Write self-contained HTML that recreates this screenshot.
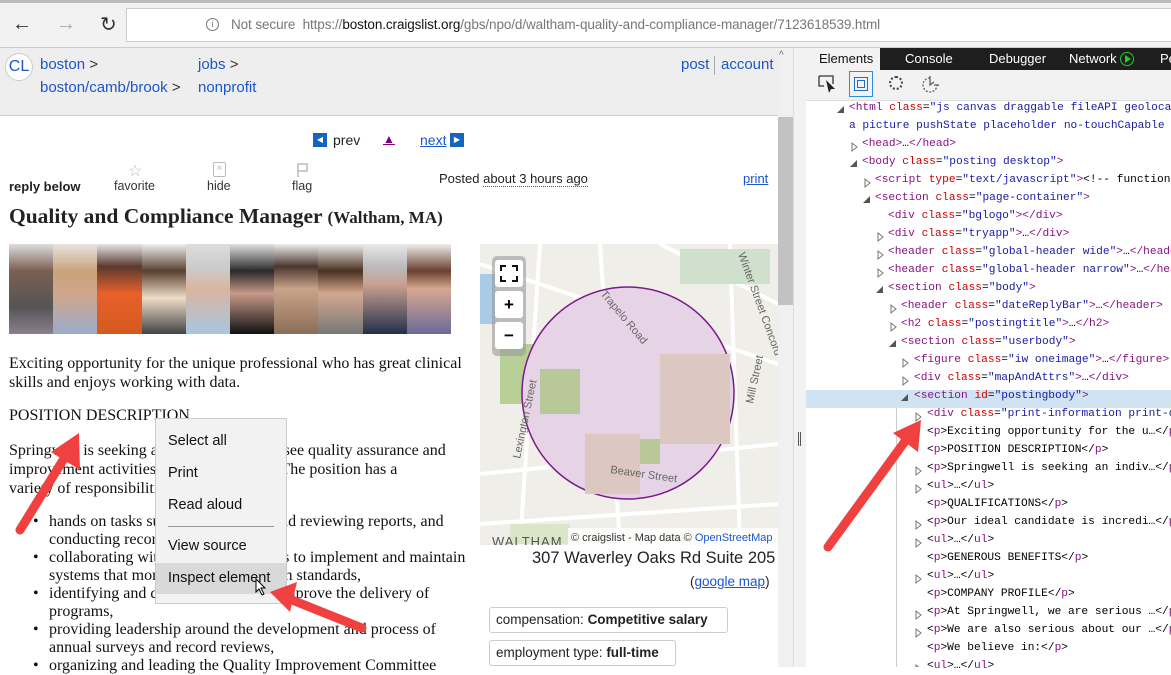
<!DOCTYPE html>
<html><head><meta charset="utf-8"><style>
*{margin:0;padding:0;box-sizing:border-box}
body{width:1171px;height:667px;overflow:hidden;background:#fff;position:relative;font-family:"Liberation Sans",sans-serif}
.a{position:absolute;white-space:nowrap}
.lk{color:#1a56cc}
.s{font-family:"Liberation Serif",serif;font-size:16px;color:#111}
.m{font-family:"Liberation Mono",monospace;font-size:11.2px;color:#000}
.n{color:#881280}.at{color:#c80000}.v{color:#1a1aa6}
ul.b{list-style:none}
ul.b li{position:relative;padding-left:16px;line-height:18px}
ul.b li:before{content:"\2022";position:absolute;left:0;top:0}
</style></head><body>
<div class="a" style="left:0;top:0;width:1171px;height:3px;background:#bbb"></div>
<div class="a" style="left:0;top:3px;width:1171px;height:45px;background:#f2f2f2;border-bottom:1px solid #ccc"></div>
<div class="a" style="left:12px;top:13px;font-size:20px;color:#333">&#8592;</div>
<div class="a" style="left:56px;top:13px;font-size:20px;color:#aaa">&#8594;</div>
<div class="a" style="left:100px;top:12px;font-size:20px;color:#333">&#8635;</div>
<svg class="a" style="left:144px;top:16px" width="18" height="16"><path d="M2 8 L9 2 L16 8 M4 7 V15 H8 V10 H10 V15 H14 V7" fill="none" stroke="#333" stroke-width="1.3"/></svg>
<div class="a" style="left:126px;top:8px;width:1045px;height:34px;background:#fff;border:1px solid #ccc;border-right:none"></div>
<div class="a" style="left:206px;top:18px;width:13px;height:13px;border:1px solid #777;border-radius:50%;font-size:9px;text-align:center;line-height:11px;color:#777">i</div>
<div class="a" style="left:231px;top:17px;font-size:13.5px;color:#777;letter-spacing:-0.1px">Not secure&nbsp; https://<span style="color:#111">boston.craigslist.org</span>/gbs/npo/d/waltham-quality-and-compliance-manager/7123618539.html</div>

<div class="a" style="left:0;top:48px;width:778px;height:68px;background:#eee;border-bottom:1px solid #ccc"></div>
<div class="a" style="left:5px;top:53px;width:28px;height:28px;border-radius:50%;background:#fff;border:1px solid #ccc;color:#1a56cc;font-size:16px;text-align:center;line-height:26px">CL</div>
<div class="a lk" style="left:40px;top:56px;font-size:15px">boston <span style="color:#333">&gt;</span></div>
<div class="a lk" style="left:40px;top:79px;font-size:15px">boston/camb/brook <span style="color:#333">&gt;</span></div>
<div class="a lk" style="left:198px;top:56px;font-size:15px">jobs <span style="color:#333">&gt;</span></div>
<div class="a lk" style="left:198px;top:79px;font-size:15px">nonprofit</div>
<div class="a lk" style="left:681px;top:56px;font-size:15px">post</div>
<div class="a" style="left:714px;top:56px;width:1px;height:19px;background:#aaa"></div>
<div class="a lk" style="left:721px;top:56px;font-size:15px">account</div>

<div class="a" style="left:313px;top:133px;width:14px;height:14px;background:#1565c0;color:#fff;font-size:8px;text-align:center;line-height:14px">&#9664;</div>
<div class="a" style="left:333px;top:132px;font-size:14px;color:#222">prev</div>
<div class="a" style="left:383px;top:132px;font-size:12px;color:#800080;text-decoration:underline">&#9650;</div>
<div class="a lk" style="left:420px;top:132px;font-size:14px;text-decoration:underline;width:50px;height:18px">next</div>
<div class="a" style="left:450px;top:133px;width:14px;height:14px;background:#1565c0;color:#fff;font-size:8px;text-align:center;line-height:14px">&#9654;</div>

<div class="a" style="left:9px;top:179px;font-size:13px;font-weight:bold;color:#222">reply below</div>
<div class="a" style="left:128px;top:161px;font-size:16px;color:#bbb">&#9734;</div>
<div class="a" style="left:114px;top:179px;font-size:12.5px;color:#333">favorite</div>
<div class="a" style="left:213px;top:162px;width:13px;height:15px;border:1.5px solid #bbb;border-radius:2px;font-size:10px;color:#bbb;text-align:center;line-height:12px">&#215;</div>
<div class="a" style="left:207px;top:179px;font-size:12.5px;color:#333">hide</div>
<svg class="a" style="left:296px;top:162px" width="14" height="16"><path d="M2 15 V2 H11 V9 H2" fill="none" stroke="#bbb" stroke-width="1.5"/></svg>
<div class="a" style="left:292px;top:179px;font-size:12.5px;color:#333">flag</div>
<div class="a" style="left:439px;top:171px;font-size:13px;color:#222">Posted <span style="border-bottom:1px dotted #555">about 3 hours ago</span></div>
<div class="a lk" style="left:743px;top:171px;font-size:13px;text-decoration:underline">print</div>
<div class="a" style="left:9px;top:204px;font-family:'Liberation Serif',serif;font-size:21.5px;font-weight:bold;color:#222">Quality and Compliance Manager <span style="font-size:17px">(Waltham, MA)</span></div>

<div class="a" style="left:9px;top:244px;width:442px;height:90px;display:flex">
<div style="flex:1;background:linear-gradient(180deg,#ddd 0%,#7a5f52 30%,#555 70%,#8a7f90 100%)"></div>
<div style="flex:1;background:linear-gradient(180deg,#e8e4e0 0%,#c9a27a 30%,#d0a58a 55%,#9aaccc 100%)"></div>
<div style="flex:1;background:linear-gradient(180deg,#e5e5e5 0%,#5a3a30 25%,#e8602a 55%,#d55a20 100%)"></div>
<div style="flex:1;background:linear-gradient(180deg,#eee 0%,#5a4030 30%,#eeddc8 60%,#444 100%)"></div>
<div style="flex:1;background:linear-gradient(180deg,#ddd 0%,#ccc 25%,#d9b5a0 50%,#a8c6e0 100%)"></div>
<div style="flex:1;background:linear-gradient(180deg,#e0e0e0 0%,#2a2a2a 30%,#c89a8a 55%,#111 100%)"></div>
<div style="flex:1;background:linear-gradient(180deg,#eee 0%,#4a3630 25%,#c9a48a 50%,#8b6e56 100%)"></div>
<div style="flex:1;background:linear-gradient(180deg,#eee 0%,#4a3020 30%,#d4a890 55%,#777 100%)"></div>
<div style="flex:1;background:linear-gradient(180deg,#e8e8e8 0%,#bbb 25%,#c9a090 45%,#22304a 100%)"></div>
<div style="flex:1;background:linear-gradient(180deg,#eee 0%,#6a4030 30%,#d6a890 50%,#6a6a9a 100%)"></div>
</div>

<div class="a s" style="left:9px;top:354px;line-height:19px">Exciting opportunity for the unique professional who has great clinical<br>skills and enjoys working with data.</div>
<div class="a s" style="left:9px;top:407px">POSITION DESCRIPTION</div>
<div class="a s" style="left:9px;top:441px;line-height:19px">Springwell is seeking an individual to oversee quality assurance and<br>improvement activities within the agency. The position has a<br>variety of responsibilities consisting of:</div>
<ul class="a s b" style="left:33px;top:513px">
<li>hands on tasks such as completing and reviewing reports, and<br>conducting record reviews,</li>
<li>collaborating with program managers to implement and maintain<br>systems that monitor compliance with standards,</li>
<li>identifying and developing ways to improve the delivery of<br>programs,</li>
<li>providing leadership around the development and process of<br>annual surveys and record reviews,</li>
<li>organizing and leading the Quality Improvement Committee</li>
</ul>

<svg class="a" style="left:480px;top:244px" width="298" height="301">
<rect width="298" height="301" fill="#f0eee9"/>
<path d="M0 20 L298 120 M60 0 L40 301 M120 0 L140 301 M180 0 L298 60 M0 230 L298 200 M0 280 L298 260 M250 0 L260 301" stroke="#fff" stroke-width="4" fill="none"/>
<rect x="200" y="5" width="90" height="35" fill="#cfe0cc"/>
<rect x="20" y="100" width="60" height="60" fill="#b8cf98"/>
<rect x="30" y="280" width="60" height="20" fill="#d9e6c8"/>
<rect x="0" y="30" width="15" height="50" fill="#a8cbe8"/>
<circle cx="148" cy="149" r="106" fill="#e6d4e6" stroke="#7a1a8a" stroke-width="1.5"/>
<rect x="180" y="110" width="70" height="90" fill="#dcc8c0"/>
<rect x="105" y="190" width="55" height="60" fill="#dcc8c0"/>
<rect x="60" y="125" width="40" height="45" fill="#b8c898"/>
<rect x="160" y="195" width="20" height="25" fill="#b8c898"/>
<text x="120" y="50" font-size="11" fill="#666" transform="rotate(50 120 50)">Trapelo Road</text>
<text x="130" y="229" font-size="11" fill="#666" transform="rotate(8 130 229)">Beaver Street</text>
<text x="40" y="215" font-size="11" fill="#666" transform="rotate(-78 40 215)">Lexington Street</text>
<text x="258" y="10" font-size="11" fill="#666" transform="rotate(70 258 10)">Winter Street Concord</text>
<text x="273" y="160" font-size="11" fill="#666" transform="rotate(-78 273 160)">Mill Street</text>
<rect x="12" y="12" width="34" height="100" rx="5" fill="#999" opacity=".6"/>
<rect x="15" y="16" width="28" height="27" rx="3" fill="#fff"/>
<path d="M21 27 V22 H26 M32 22 H37 V27 M37 32 V37 H32 M26 37 H21 V32" stroke="#111" stroke-width="2" fill="none"/>
<rect x="15" y="47" width="28" height="27" rx="3" fill="#fff"/>
<text x="29" y="66" font-size="17" font-weight="bold" text-anchor="middle">+</text>
<rect x="15" y="78" width="28" height="27" rx="3" fill="#fff"/>
<text x="29" y="97" font-size="17" font-weight="bold" text-anchor="middle">−</text>
<rect x="88" y="284" width="210" height="17" fill="#fff" opacity=".8"/>
<text x="91" y="297" font-size="11" fill="#333">© craigslist - Map data © <tspan fill="#1a56cc">OpenStreetMap</tspan></text>
<text x="12" y="302" font-size="13" fill="#555" letter-spacing="1">WALTHAM</text>
</svg>
<div class="a" style="left:532px;top:549px;font-size:16.5px;color:#222">307 Waverley Oaks Rd Suite 205</div>
<div class="a" style="left:690px;top:574px;font-size:13.5px;color:#222">(<span class="lk" style="text-decoration:underline">google map</span>)</div>
<div class="a" style="left:489px;top:607px;width:239px;height:26px;border:1px solid #ccc;border-radius:3px;font-size:13.5px;color:#222;padding:4px 6px">compensation: <b>Competitive salary</b></div>
<div class="a" style="left:489px;top:640px;width:187px;height:26px;border:1px solid #ccc;border-radius:3px;font-size:13.5px;color:#222;padding:4px 6px">employment type: <b>full-time</b></div>

<div class="a" style="left:155px;top:418px;width:132px;height:186px;background:#f2f2f2;border:1px solid #ccc"></div>
<div class="a" style="left:168px;top:433px;font-size:14.5px;color:#111">Select all</div>
<div class="a" style="left:168px;top:465px;font-size:14.5px;color:#111">Print</div>
<div class="a" style="left:168px;top:497px;font-size:14.5px;color:#111">Read aloud</div>
<div class="a" style="left:168px;top:526px;width:106px;height:1px;background:#999"></div>
<div class="a" style="left:156px;top:563px;width:130px;height:31px;background:#d9d9d9"></div>
<div class="a" style="left:168px;top:538px;font-size:14.5px;color:#111">View source</div>
<div class="a" style="left:168px;top:570px;font-size:14.5px;color:#111">Inspect element</div>
<svg class="a" style="left:255px;top:578px" width="12" height="18"><path d="M1 1 V14 L4 11 L7 17 L9 16 L6 10 H10 Z" fill="#fff" stroke="#000"/></svg>

<div class="a" style="left:778px;top:48px;width:15px;height:619px;background:#f0f0f0"></div>
<div class="a" style="left:778px;top:117px;width:15px;height:188px;background:#c2c2c2"></div>
<div class="a" style="left:779px;top:50px;font-size:10px;color:#666">^</div>
<div class="a" style="left:793px;top:48px;width:13px;height:619px;background:#f2f2f2;border-left:1px solid #ddd"></div>
<div class="a" style="left:798px;top:432px;width:1px;height:14px;background:#555"></div>
<div class="a" style="left:800px;top:432px;width:1px;height:14px;background:#555"></div>

<div class="a" style="left:806px;top:48px;width:365px;height:52px;background:#f2f2f2"></div>
<div class="a" style="left:880px;top:48px;width:291px;height:22px;background:#1e1e1e"></div>
<div class="a" style="left:819px;top:51px;font-size:13px;color:#111">Elements</div>
<div class="a" style="left:905px;top:51px;font-size:13px;color:#fff">Console</div>
<div class="a" style="left:989px;top:51px;font-size:13px;color:#fff">Debugger</div>
<div class="a" style="left:1069px;top:51px;font-size:13px;color:#fff">Network</div>
<div class="a" style="left:1120px;top:52px;width:14px;height:14px;border:1.5px solid #2c2;border-radius:50%"></div>
<svg class="a" style="left:1124px;top:55px" width="8" height="8"><path d="M1 0 L7 4 L1 8 Z" fill="#2c2"/></svg>
<div class="a" style="left:1160px;top:51px;font-size:13px;color:#fff">Pe</div>
<svg class="a" style="left:818px;top:74px" width="20" height="20"><path d="M1 2 H15 V10 M1 2 V12 H6" fill="none" stroke="#333" stroke-width="1.3"/><path d="M8 6 L17 15 L13 15 L11 19 Z" fill="#222"/></svg>
<div class="a" style="left:849px;top:71px;width:24px;height:26px;border:1px solid #2b8ce8"></div>
<div class="a" style="left:854px;top:77px;width:14px;height:14px;border:1.5px solid #1a6fc8"></div>
<div class="a" style="left:857px;top:80px;width:8px;height:8px;border:1px solid #1a6fc8"></div>
<div class="a" style="left:889px;top:76px;width:14px;height:14px;border:2.5px dotted #444;border-radius:50%"></div>
<svg class="a" style="left:920px;top:74px" width="20" height="20"><path d="M10 4 A7 7 0 1 0 17 11" fill="none" stroke="#666" stroke-width="1.3" stroke-dasharray="2 1.5"/><path d="M10 2 V11 L14 8 M14 11 H19" fill="none" stroke="#555" stroke-width="1.2"/></svg>
<div class="a" style="left:806px;top:100px;width:365px;height:1px;background:#ddd"></div>
<div class="a" style="left:806px;top:390px;width:365px;height:18px;background:#cfe3f3"></div>
<div class="a" style="left:896px;top:408px;width:1px;height:259px;background:#ccc"></div>

<svg class="a" style="left:0;top:0" width="1171" height="667">
<g fill="#555">
<polygon points="844,113 844,106 837,113"/>
<polygon points="857,167 857,160 850,167"/>
<polygon points="870,203 870,196 863,203"/>
<polygon points="883,293 883,286 876,293"/>
<polygon points="896,347 896,340 889,347"/>
<polygon points="908,401 908,394 901,401"/>
</g>
<g fill="none" stroke="#777">
<path d="M852 143 L852 151 L857 147 Z"/>
<path d="M865 179 L865 187 L870 183 Z"/>
<path d="M878 233 L878 241 L883 237 Z"/><path d="M878 251 L878 259 L883 255 Z"/><path d="M878 269 L878 277 L883 273 Z"/>
<path d="M891 305 L891 313 L896 309 Z"/><path d="M891 323 L891 331 L896 327 Z"/>
<path d="M903 359 L903 367 L908 363 Z"/><path d="M903 377 L903 385 L908 381 Z"/>
<path d="M916 413 L916 421 L921 417 Z"/>
<path d="M916 467 L916 475 L921 471 Z"/><path d="M916 485 L916 493 L921 489 Z"/>
<path d="M916 521 L916 529 L921 525 Z"/><path d="M916 539 L916 547 L921 543 Z"/>
<path d="M916 575 L916 583 L921 579 Z"/>
<path d="M916 611 L916 619 L921 615 Z"/><path d="M916 629 L916 637 L921 633 Z"/>
<path d="M916 665 L916 673 L921 669 Z"/>
</g>
</svg>

<div class="m">
<div class="a" style="left:849px;top:102px"><span class="n">&lt;html</span> <span class="at">class</span>=<span class="v">"js canvas draggable fileAPI geolocation</span></div>
<div class="a v" style="left:849px;top:120px">a picture pushState placeholder no-touchCapable t</div>
<div class="a" style="left:862px;top:138px"><span class="n">&lt;head&gt;</span>…<span class="n">&lt;/head&gt;</span></div>
<div class="a" style="left:862px;top:156px"><span class="n">&lt;body</span> <span class="at">class</span>=<span class="v">"posting desktop"</span><span class="n">&gt;</span></div>
<div class="a" style="left:875px;top:174px"><span class="n">&lt;script</span> <span class="at">type</span>=<span class="v">"text/javascript"</span><span class="n">&gt;</span>&lt;!-- function</div>
<div class="a" style="left:875px;top:192px"><span class="n">&lt;section</span> <span class="at">class</span>=<span class="v">"page-container"</span><span class="n">&gt;</span></div>
<div class="a" style="left:888px;top:210px"><span class="n">&lt;div</span> <span class="at">class</span>=<span class="v">"bglogo"</span><span class="n">&gt;&lt;/div&gt;</span></div>
<div class="a" style="left:888px;top:228px"><span class="n">&lt;div</span> <span class="at">class</span>=<span class="v">"tryapp"</span><span class="n">&gt;</span>…<span class="n">&lt;/div&gt;</span></div>
<div class="a" style="left:888px;top:246px"><span class="n">&lt;header</span> <span class="at">class</span>=<span class="v">"global-header wide"</span><span class="n">&gt;</span>…<span class="n">&lt;/header&gt;</span></div>
<div class="a" style="left:888px;top:264px"><span class="n">&lt;header</span> <span class="at">class</span>=<span class="v">"global-header narrow"</span><span class="n">&gt;</span>…<span class="n">&lt;/header&gt;</span></div>
<div class="a" style="left:888px;top:282px"><span class="n">&lt;section</span> <span class="at">class</span>=<span class="v">"body"</span><span class="n">&gt;</span></div>
<div class="a" style="left:901px;top:300px"><span class="n">&lt;header</span> <span class="at">class</span>=<span class="v">"dateReplyBar"</span><span class="n">&gt;</span>…<span class="n">&lt;/header&gt;</span></div>
<div class="a" style="left:901px;top:318px"><span class="n">&lt;h2</span> <span class="at">class</span>=<span class="v">"postingtitle"</span><span class="n">&gt;</span>…<span class="n">&lt;/h2&gt;</span></div>
<div class="a" style="left:901px;top:336px"><span class="n">&lt;section</span> <span class="at">class</span>=<span class="v">"userbody"</span><span class="n">&gt;</span></div>
<div class="a" style="left:914px;top:354px"><span class="n">&lt;figure</span> <span class="at">class</span>=<span class="v">"iw oneimage"</span><span class="n">&gt;</span>…<span class="n">&lt;/figure&gt;</span></div>
<div class="a" style="left:914px;top:372px"><span class="n">&lt;div</span> <span class="at">class</span>=<span class="v">"mapAndAttrs"</span><span class="n">&gt;</span>…<span class="n">&lt;/div&gt;</span></div>
<div class="a" style="left:914px;top:390px"><span class="n">&lt;section</span> <span class="at">id</span>=<span class="v">"postingbody"</span><span class="n">&gt;</span></div>
<div class="a" style="left:927px;top:408px"><span class="n">&lt;div</span> <span class="at">class</span>=<span class="v">"print-information print-qrcode</span></div>
<div class="a" style="left:927px;top:426px">&lt;<span class="n">p</span>&gt;Exciting opportunity for the u…&lt;/<span class="n">p</span>&gt;</div>
<div class="a" style="left:927px;top:444px">&lt;<span class="n">p</span>&gt;POSITION DESCRIPTION&lt;/<span class="n">p</span>&gt;</div>
<div class="a" style="left:927px;top:462px">&lt;<span class="n">p</span>&gt;Springwell is seeking an indiv…&lt;/<span class="n">p</span>&gt;</div>
<div class="a" style="left:927px;top:480px">&lt;<span class="n">ul</span>&gt;…&lt;/<span class="n">ul</span>&gt;</div>
<div class="a" style="left:927px;top:498px">&lt;<span class="n">p</span>&gt;QUALIFICATIONS&lt;/<span class="n">p</span>&gt;</div>
<div class="a" style="left:927px;top:516px">&lt;<span class="n">p</span>&gt;Our ideal candidate is incredi…&lt;/<span class="n">p</span>&gt;</div>
<div class="a" style="left:927px;top:534px">&lt;<span class="n">ul</span>&gt;…&lt;/<span class="n">ul</span>&gt;</div>
<div class="a" style="left:927px;top:552px">&lt;<span class="n">p</span>&gt;GENEROUS BENEFITS&lt;/<span class="n">p</span>&gt;</div>
<div class="a" style="left:927px;top:570px">&lt;<span class="n">ul</span>&gt;…&lt;/<span class="n">ul</span>&gt;</div>
<div class="a" style="left:927px;top:588px">&lt;<span class="n">p</span>&gt;COMPANY PROFILE&lt;/<span class="n">p</span>&gt;</div>
<div class="a" style="left:927px;top:606px">&lt;<span class="n">p</span>&gt;At Springwell, we are serious …&lt;/<span class="n">p</span>&gt;</div>
<div class="a" style="left:927px;top:624px">&lt;<span class="n">p</span>&gt;We are also serious about our …&lt;/<span class="n">p</span>&gt;</div>
<div class="a" style="left:927px;top:642px">&lt;<span class="n">p</span>&gt;We believe in:&lt;/<span class="n">p</span>&gt;</div>
<div class="a" style="left:927px;top:660px">&lt;<span class="n">ul</span>&gt;…&lt;/<span class="n">ul</span>&gt;</div>
</div>

<svg class="a" style="left:0;top:0" width="1171" height="667">
<g stroke="#f04040" stroke-width="9" stroke-linecap="round">
<line x1="20" y1="530" x2="68" y2="452"/>
<line x1="362" y1="628" x2="292" y2="600"/>
<line x1="828" y1="547" x2="906" y2="440"/>
</g>
<g fill="#f04040">
<polygon points="79,433 51,452 80,470"/>
<polygon points="270,592 297,582 290,612"/>
<polygon points="921,420 893,433 918,452"/>
</g>
</svg>
</body></html>
